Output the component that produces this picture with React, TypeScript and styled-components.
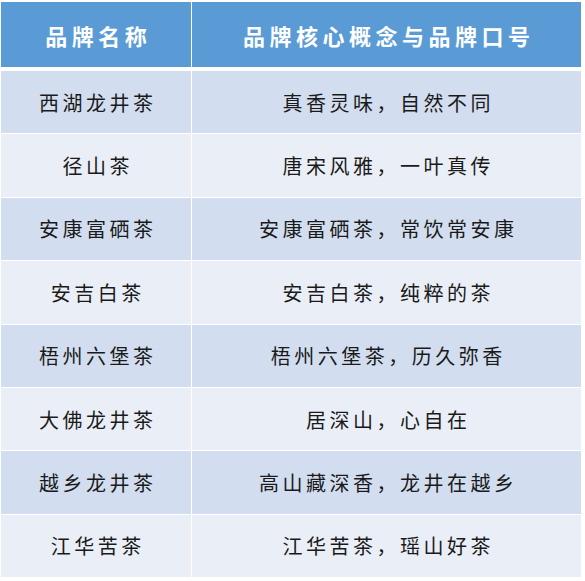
import React from 'react';
import styled, { createGlobalStyle } from 'styled-components';

const GlobalStyle = createGlobalStyle`
  html, body {
    margin: 0;
    padding: 0;
    background: #ffffff;
  }
  body {
    font-family: "Noto Sans CJK SC", "Noto Sans", sans-serif;
  }
`;

const brands = [
  { name: '西湖龙井茶', slogan: '真香灵味，自然不同' },
  { name: '径山茶', slogan: '唐宋风雅，一叶真传' },
  { name: '安康富硒茶', slogan: '安康富硒茶，常饮常安康' },
  { name: '安吉白茶', slogan: '安吉白茶，纯粹的茶' },
  { name: '梧州六堡茶', slogan: '梧州六堡茶，历久弥香' },
  { name: '大佛龙井茶', slogan: '居深山，心自在' },
  { name: '越乡龙井茶', slogan: '高山藏深香，龙井在越乡' },
  { name: '江华苦茶', slogan: '江华苦茶，瑶山好茶' },
];

export default function App() {
  return (
    <>
      <GlobalStyle />
      <Page>
        <Table>
          <HeadCell>品牌名称</HeadCell>
          <HeadCell>品牌核心概念与品牌口号</HeadCell>
          {brands.map((b, i) => (
            <React.Fragment key={b.name}>
              <Cell $odd={i % 2 === 0}>{b.name}</Cell>
              <Cell $odd={i % 2 === 0}>{b.slogan}</Cell>
            </React.Fragment>
          ))}
        </Table>
      </Page>
    </>
  );
}

const Page = styled.div`
  padding: 2px 0 0 1px;
`;

const Table = styled.div`
  width: 580px;
  display: grid;
  grid-template-columns: 190px 1fr;
  grid-template-rows: 68px repeat(8, 62.375px);
  gap: 1px;
  background: #ffffff;
`;

const HeadCell = styled.div`
  box-sizing: border-box;
  display: flex;
  align-items: center;
  justify-content: center;
  background: #5b9bd5;
  border-bottom: 3px solid #ffffff;
  color: #ffffff;
  font-size: 22px;
  font-weight: 700;
  letter-spacing: 4.5px;
  padding-left: 4.5px;
`;

const Cell = styled.div<{ $odd: boolean }>`
  display: flex;
  align-items: center;
  justify-content: center;
  background: ${(p) => (p.$odd ? '#d2deef' : '#eaeff7')};
  color: #1a1a1a;
  font-size: 20px;
  letter-spacing: 3.5px;
  padding-left: 3.5px;
`;
